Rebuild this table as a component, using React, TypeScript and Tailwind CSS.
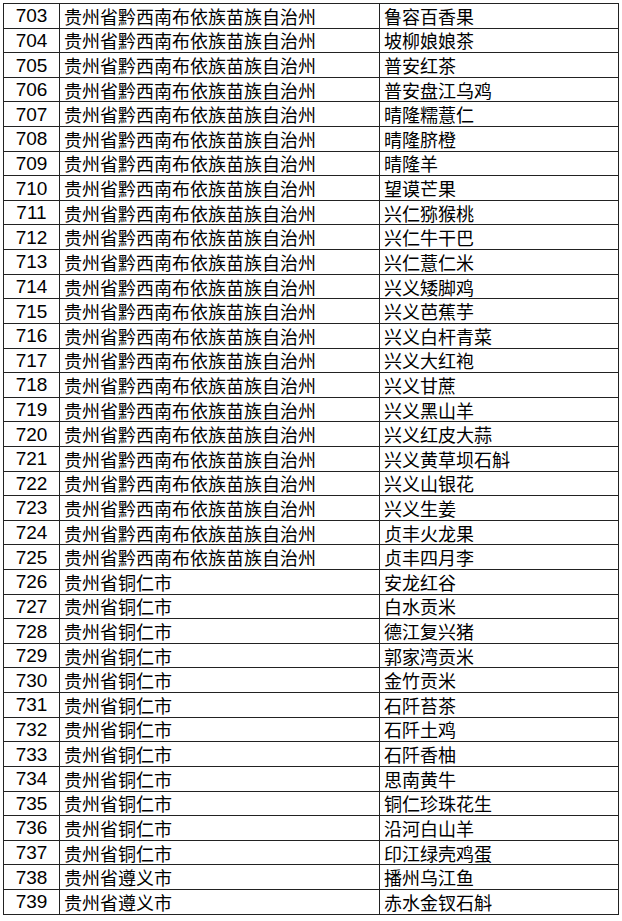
const rows: [number, string, string][] = [
  [703, "贵州省黔西南布依族苗族自治州", "鲁容百香果"],
  [704, "贵州省黔西南布依族苗族自治州", "坡柳娘娘茶"],
  [705, "贵州省黔西南布依族苗族自治州", "普安红茶"],
  [706, "贵州省黔西南布依族苗族自治州", "普安盘江乌鸡"],
  [707, "贵州省黔西南布依族苗族自治州", "晴隆糯薏仁"],
  [708, "贵州省黔西南布依族苗族自治州", "晴隆脐橙"],
  [709, "贵州省黔西南布依族苗族自治州", "晴隆羊"],
  [710, "贵州省黔西南布依族苗族自治州", "望谟芒果"],
  [711, "贵州省黔西南布依族苗族自治州", "兴仁猕猴桃"],
  [712, "贵州省黔西南布依族苗族自治州", "兴仁牛干巴"],
  [713, "贵州省黔西南布依族苗族自治州", "兴仁薏仁米"],
  [714, "贵州省黔西南布依族苗族自治州", "兴义矮脚鸡"],
  [715, "贵州省黔西南布依族苗族自治州", "兴义芭蕉芋"],
  [716, "贵州省黔西南布依族苗族自治州", "兴义白杆青菜"],
  [717, "贵州省黔西南布依族苗族自治州", "兴义大红袍"],
  [718, "贵州省黔西南布依族苗族自治州", "兴义甘蔗"],
  [719, "贵州省黔西南布依族苗族自治州", "兴义黑山羊"],
  [720, "贵州省黔西南布依族苗族自治州", "兴义红皮大蒜"],
  [721, "贵州省黔西南布依族苗族自治州", "兴义黄草坝石斛"],
  [722, "贵州省黔西南布依族苗族自治州", "兴义山银花"],
  [723, "贵州省黔西南布依族苗族自治州", "兴义生姜"],
  [724, "贵州省黔西南布依族苗族自治州", "贞丰火龙果"],
  [725, "贵州省黔西南布依族苗族自治州", "贞丰四月李"],
  [726, "贵州省铜仁市", "安龙红谷"],
  [727, "贵州省铜仁市", "白水贡米"],
  [728, "贵州省铜仁市", "德江复兴猪"],
  [729, "贵州省铜仁市", "郭家湾贡米"],
  [730, "贵州省铜仁市", "金竹贡米"],
  [731, "贵州省铜仁市", "石阡苔茶"],
  [732, "贵州省铜仁市", "石阡土鸡"],
  [733, "贵州省铜仁市", "石阡香柚"],
  [734, "贵州省铜仁市", "思南黄牛"],
  [735, "贵州省铜仁市", "铜仁珍珠花生"],
  [736, "贵州省铜仁市", "沿河白山羊"],
  [737, "贵州省铜仁市", "印江绿壳鸡蛋"],
  [738, "贵州省遵义市", "播州乌江鱼"],
  [739, "贵州省遵义市", "赤水金钗石斛"],
]

export default function App() {
  return (
    <div className="min-h-screen bg-white pt-[3px] pl-[3px]">
      <table className="w-[615px] table-fixed border-collapse text-[18px] leading-none text-black">
        <colgroup>
          <col className="w-[56px]" />
          <col className="w-[320px]" />
          <col className="w-[239px]" />
        </colgroup>
        <tbody>
          {rows.map(([no, region, product]) => (
            <tr key={no} className="h-[24.62px]">
              <td className="border border-[#222] p-0 text-center align-middle text-[19px] font-['Liberation_Sans',Arial,sans-serif]">
                {no}
              </td>
              <td className="border border-[#222] py-0 pl-[4px] align-middle font-['Noto_Sans_CJK_SC',sans-serif] whitespace-nowrap">
                {region}
              </td>
              <td className="border border-[#222] py-0 pl-[4px] align-middle font-['Noto_Sans_CJK_SC',sans-serif] whitespace-nowrap">
                {product}
              </td>
            </tr>
          ))}
        </tbody>
      </table>
    </div>
  )
}
